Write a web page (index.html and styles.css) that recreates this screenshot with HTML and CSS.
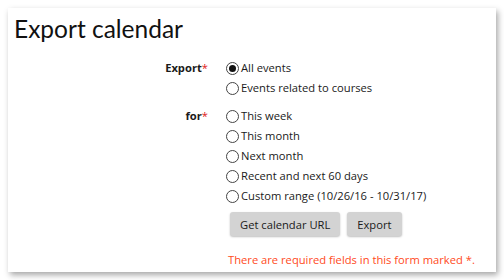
FILE: index.html
```html
<!DOCTYPE html>
<html>
<head>
<meta charset="utf-8">
<link rel="stylesheet" href="styles.css">
</head>
<body>
<div class="card">
  <h2 class="title">Export calendar</h2>
  <div class="form">
    <div class="group">
      <div class="label">Export<span class="req">*</span></div>
      <div class="controls">
        <div class="opt"><span class="radio checked"></span>All events</div>
        <div class="opt"><span class="radio"></span>Events related to courses</div>
      </div>
    </div>
    <div class="group">
      <div class="label">for<span class="req">*</span></div>
      <div class="controls">
        <div class="opt"><span class="radio"></span>This week</div>
        <div class="opt"><span class="radio"></span>This month</div>
        <div class="opt"><span class="radio"></span>Next month</div>
        <div class="opt"><span class="radio"></span>Recent and next 60 days</div>
        <div class="opt"><span class="radio"></span>Custom range (10/26/16 - 10/31/17)</div>
      </div>
    </div>
    <div class="group">
      <div class="label"></div>
      <div class="buttons">
        <button class="btn">Get calendar URL</button>
        <button class="btn">Export</button>
      </div>
    </div>
    <div class="group">
      <div class="label"></div>
      <div class="notice">There are required fields in this form marked <span class="req">*</span>.</div>
    </div>
  </div>
</div>
</body>
</html>
```
FILE: styles.css
```css
html, body { margin: 0; padding: 0; background: #fff; }
body { padding: 8px; font-family: "Open Sans", "Liberation Sans", sans-serif; font-size: 11.2px; color: #1a1a1a; }
.card {
  width: 488px;
  height: 264px;
  box-sizing: border-box;
  background: #fff;
  box-shadow: 2px 3px 6px rgba(0,0,0,0.35);
  padding: 6px 6px 0 6px;
}
.title {
  margin: 0;
  font-family: "Lato", "Open Sans", sans-serif;
  font-weight: 400;
  font-size: 24.5px;
  line-height: 30px;
  color: #111;
}
.form { margin-top: 14px; }
.group { display: grid; grid-template-columns: 194px 1fr; column-gap: 18px; margin-bottom: 8px; }
.label { text-align: right; font-weight: 700; line-height: 20px; }
.req { color: #e0201a; font-weight: 400; }
.opt { display: flex; align-items: center; height: 20px; line-height: 20px; }
.radio {
  width: 11px; height: 11px;
  border: 1px solid #444;
  border-radius: 50%;
  margin-right: 2px;
  display: inline-flex; align-items: center; justify-content: center;
  background: #fff;
}
.radio.checked::after { content: ""; width: 7px; height: 7px; border-radius: 50%; background: #111; }
.buttons { display: flex; gap: 7px; padding-left: 4px; margin-top: -2px; }
.btn {
  font-family: "Open Sans", "Liberation Sans", sans-serif;
  font-size: 11.2px;
  color: #1a1a1a;
  background: #d3d3d3;
  border: none;
  border-radius: 3px;
  box-shadow: 0 1px 2px rgba(0,0,0,0.25);
  height: 24px;
  padding: 0 10px;
}
.notice { color: #ff4a1c; padding-left: 2px; margin-top: 8px; line-height: 16px; }
.notice .req { color: #ff4a1c; }
```
